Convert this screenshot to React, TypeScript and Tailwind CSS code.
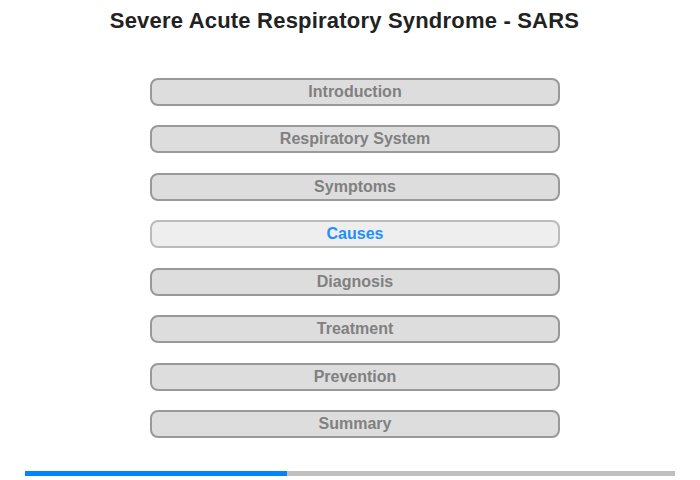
export default function App() {
  const items = [
    "Introduction",
    "Respiratory System",
    "Symptoms",
    "Causes",
    "Diagnosis",
    "Treatment",
    "Prevention",
    "Summary",
  ];
  return (
    <div className="w-[700px] h-[480px] bg-white relative overflow-hidden" style={{ fontFamily: '"Liberation Sans", Arial, sans-serif' }}>
      <div className="pt-[8px] h-[78px] w-[689px] text-center">
        <h1 className="text-[22px] leading-[26px] font-bold text-[#222222] tracking-[0.2px]">Severe Acute Respiratory Syndrome - SARS</h1>
      </div>
      <div className="flex flex-col gap-[19.45px] pl-[150px]">
        {items.map((t) => {
          const active = t === "Causes";
          return (
            <div
              key={t}
              className={
                "w-[410px] h-[28px] rounded-[8px] border-2 flex items-center justify-center text-[16px] font-bold " +
                (active
                  ? "bg-[#eeeeee] border-[#bbbbbb] text-[#1e90ff]"
                  : "bg-[#dddddd] border-[#999999] text-[#808080]")
              }
            >
              {t}
            </div>
          );
        })}
      </div>
      <div className="absolute left-[25px] top-[471px] w-[650px] h-[5px] bg-[#c0c0c0] flex">
        <div className="w-[262px] h-full bg-[#0084ff]" />
      </div>
    </div>
  );
}
